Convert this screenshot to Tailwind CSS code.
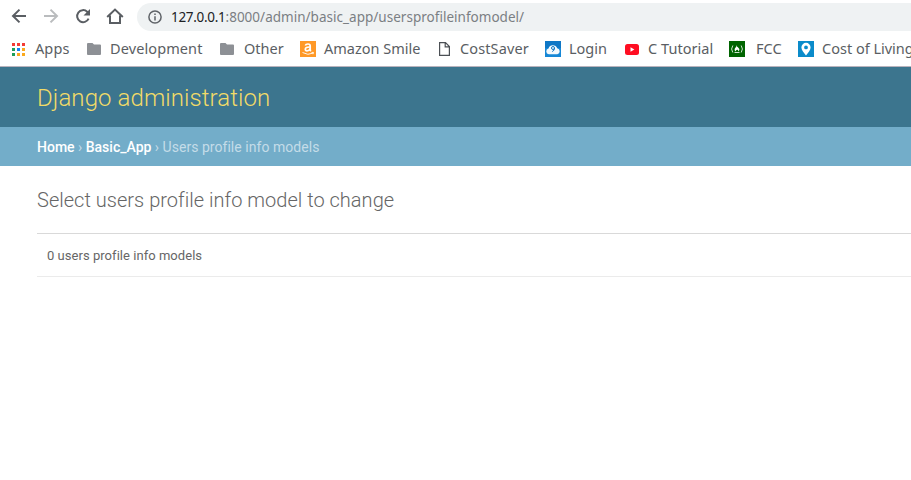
<!DOCTYPE html>
<html lang="en">
<head>
<meta charset="utf-8">
<title>Select users profile info model to change</title>
<script src="https://cdn.jsdelivr.net/npm/@tailwindcss/browser@4"></script>
</head>
<body class="w-[911px] h-[480px] overflow-hidden bg-white font-[Roboto,sans-serif]">
<div class="h-[67px] bg-white border-b border-[#b9b3bd] font-['Noto_Sans',sans-serif] overflow-hidden">
  <div class="flex h-[34px] pl-[11px]">
    <svg class="w-4 h-[33px] shrink-0" viewBox="0 0 16 33" fill="none" stroke="#5a5e63" stroke-width="2"><path d="M15 16H2.5M8.5 9.6L2 16l6.500 6.400"/></svg>
    <svg class="w-4 h-[33px] ml-4 shrink-0" viewBox="0 0 16 33" fill="none" stroke="#babcbe" stroke-width="2"><path d="M1 16h12.500M7.500 9.600L14 16l-6.500 6.400"/></svg>
    <svg class="w-4 h-[33px] ml-4 shrink-0" viewBox="0 0 16 33"><path d="M13.600 18.600A6 6 0 1 1 12.200 11.700L14 13.500" fill="none" stroke="#5a5e63" stroke-width="2"/><path d="M15 9v6.500H8.500z" fill="#5a5e63"/></svg>
    <svg class="w-[18px] h-[33px] ml-[15px] shrink-0" viewBox="0 0 18 33" fill="none" stroke="#5a5e63" stroke-width="2"><path d="M1.200 17L9 9.600 16.800 17M4 15.500V23h10v-7.500"/></svg>
    <div class="flex grow mt-[3px] ml-[13px] h-7 rounded-l-full bg-[#eff2f3] pl-[11px]">
      <svg class="w-[14px] h-[14px] mt-[7px] shrink-0" viewBox="0 0 14 14"><circle cx="7" cy="7" r="6.100" fill="none" stroke="#5f6368" stroke-width="1.500"/><path d="M6.250 6.200h1.500V10.500h-1.500zM6.250 3.500h1.500V5h-1.500z" fill="#5f6368"/></svg>
      <div class="ml-[9px] text-[13.500px] leading-[28px] whitespace-nowrap text-[#7b7f83]"><span class="text-[#202124] tracking-[-0.3px]">127.0.0.1</span><span class="tracking-[0.02px]">:8000/admin/basic_app/usersprofileinfomodel/</span></div>
    </div>
  </div>
  <div class="flex items-center h-[30px] pl-3 text-[14.500px] leading-[28px] whitespace-nowrap text-[#5a5e63]">
    <div class="flex items-center w-[75px] shrink-0">
      <svg class="w-[13px] h-[13px] mr-[10px] shrink-0" viewBox="0 0 13 13"><path d="M0 0h3v3H0zM5 0h3v3H5zM10 0h3v3h-3z" fill="#f33b35"/><path d="M0 5h3v3H0zM0 10h3v3H0z" fill="#1e9e5a"/><path d="M5 5h3v3H5z" fill="#1283f5"/><path d="M10 5h3v3h-3zM5 10h3v3H5zM10 10h3v3h-3z" fill="#fba91e"/></svg>
      <span class="-mt-0.5 tracking-[0.1px]">Apps</span>
    </div>
    <div class="flex items-center w-[133px] shrink-0">
      <svg class="w-[14px] h-3 mr-[9px] shrink-0" viewBox="0 0 14 12"><path d="M1 0h4.500L7 1.500h6q1 0 1 1V11q0 1-1 1H1q-1 0-1-1V1q0-1 1-1z" fill="#8d9095"/></svg>
      <span class="-mt-0.5 tracking-[0.1px]">Development</span>
    </div>
    <div class="flex items-center w-[80px] shrink-0">
      <svg class="w-[14px] h-3 mr-[10px] shrink-0" viewBox="0 0 14 12"><path d="M1 0h4.500L7 1.500h6q1 0 1 1V11q0 1-1 1H1q-1 0-1-1V1q0-1 1-1z" fill="#8d9095"/></svg>
      <span class="-mt-0.5">Other</span>
    </div>
    <div class="flex items-center w-[139px] shrink-0">
      <svg class="w-4 h-4 mr-2 shrink-0" viewBox="0 0 16 16"><path d="M0 0h16v16H0z" fill="#ff9927"/><path d="M5.300 4.600Q5.800 3 8 3t2.200 2V8.500q0 1 .7 1.600M10 6Q5.300 5.800 5.300 8.300q0 1.600 1.700 1.600Q9.200 9.900 10 7.800" fill="none" stroke="#fff" stroke-width="1.700"/><path d="M2.500 11.500q5.500 3.300 10.500.6M11.500 11.400h2l-.5 1.800" fill="none" stroke="#fff" stroke-width=".9"/></svg>
      <span class="-mt-0.5">Amazon Smile</span>
    </div>
    <div class="flex items-center w-[106px] shrink-0">
      <svg class="w-[11px] h-[14px] mr-[10px] shrink-0" viewBox="0 0 11 14" fill="none" stroke="#4c5055" stroke-width="1.200"><path d="M.6.600h5.900L10.400 4.500v8.900H.6zM6.200.6v4.200h4.200"/></svg>
      <span class="-mt-0.5 tracking-[0.12px]">CostSaver</span>
    </div>
    <div class="flex items-center w-[80px] shrink-0">
      <svg class="w-4 h-4 mr-2 shrink-0" viewBox="0 0 16 16"><path d="M0 0h16v16H0z" fill="#1687d6"/><path d="M0 0h16v7H0z" fill="#0f77c6"/><path d="M3.800 13.200a2.900 2.900 0 0 1-.3-5.700A4.600 4.600 0 0 1 12.200 7.300 3 3 0 0 1 12.300 13.200z" fill="#f4f9fd"/><circle cx="8" cy="7" r="1.500" fill="none" stroke="#1479c4" stroke-width="1"/><path d="M9.500 7q0 2.700-2.300 3.600" fill="none" stroke="#1479c4" stroke-width="1"/></svg>
      <span class="-mt-0.5">Login</span>
    </div>
    <div class="flex items-center w-[104px] shrink-0">
      <svg class="w-[14px] h-[11px] mr-[9px] shrink-0" viewBox="0 0 14 11"><rect width="14" height="11" rx="2.500" fill="#ff0d22"/><path d="M5.500 3.300v4.400L9.400 5.500z" fill="#fff"/></svg>
      <span class="-mt-0.5 tracking-[0.05px]">C Tutorial</span>
    </div>
    <div class="flex items-center w-[69px] shrink-0">
      <svg class="w-4 h-4 mr-[11px] shrink-0" viewBox="0 0 16 16"><path d="M0 0h16v16H0z" fill="#006400"/><path d="M3.800 4.500q-2.400 3.500 0 7M12.200 4.500q2.400 3.500 0 7M5.500 11.500h5" fill="none" stroke="#e4f0e4" stroke-width=".9"/><path d="M7.500 4q.2 1.500 1.600 2.500 1.500 1.200 1.300 2.300-.2 1.200-1.400 1.600.6-1-.3-1.900Q8 10 7.300 8.800q-.7.700-.2 1.600-1.600-.6-1.500-2 0-.9 1-1.800Q7.700 5.500 7.500 4z" fill="#fff"/></svg>
      <span class="-mt-0.5">FCC</span>
    </div>
    <div class="flex items-center shrink-0">
      <svg class="w-4 h-4 mr-2 shrink-0" viewBox="0 0 16 16"><path d="M0 0h16v16H0z" fill="#0b8bca"/><path fill-rule="evenodd" d="M8 1.800a4.600 4.600 0 0 1 4.600 4.600C12.600 9 10 11.800 8 14.400 6 11.800 3.400 9 3.400 6.400A4.600 4.600 0 0 1 8 1.800zm0 2.700a1.900 1.900 0 1 0 0 3.800 1.900 1.900 0 0 0 0-3.800z" fill="#fff"/></svg>
      <span class="-mt-0.5">Cost of Living</span>
    </div>
  </div>
</div>
<header class="h-[60px] bg-[#3c758e] pl-[37px] text-[24px] leading-[62px] font-light tracking-[0.09px] text-[#f2db68]">Django administration</header>
<nav class="h-[39px] bg-[#73adc9] pl-[37px] text-[14px] leading-[40px] text-[#c4dce8]"><span class="text-white font-medium">Home</span> › <span class="text-white font-medium">Basic_App</span> › <span class="tracking-[0.04px]">Users profile info models</span></nav>
<main class="pl-[37px] pt-5">
  <h1 class="text-[20px] leading-[28px] font-light tracking-[0.02px] text-[#666]">Select users profile info model to change</h1>
  <div class="mt-[19px] h-[44px] border-t border-b border-t-[#d9d9d9] border-b-[#ebebeb] pl-[10px] text-[13px] leading-[43px] tracking-[0.04px] text-[#666]">0 users profile info models</div>
</main>
</body>
</html>
